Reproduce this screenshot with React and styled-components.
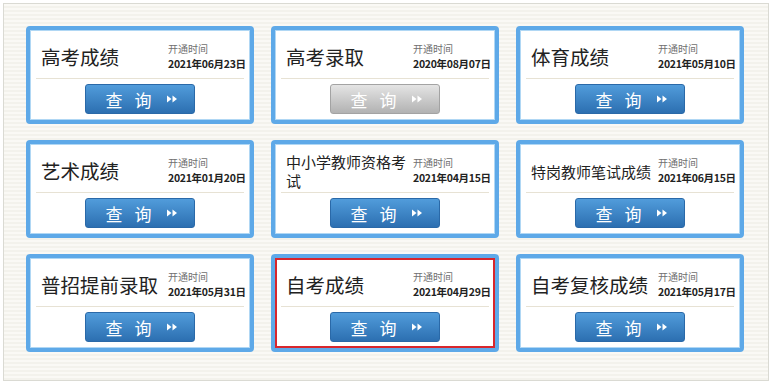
import styled, { createGlobalStyle } from "styled-components"

const Global = createGlobalStyle`
  body {
    margin: 0;
    background: #ffffff;
    font-family: "Noto Sans CJK SC", "Noto Sans", sans-serif;
  }
`

const items = [
  { title: "高考成绩", date: "2021年06月23日" },
  { title: "高考录取", date: "2020年08月07日", off: true },
  { title: "体育成绩", date: "2021年05月10日" },
  { title: "艺术成绩", date: "2021年01月20日" },
  { title: "中小学教师资格考试", date: "2021年04月15日", small: true },
  { title: "特岗教师笔试成绩", date: "2021年06月15日", small: true },
  { title: "普招提前录取", date: "2021年05月31日" },
  { title: "自考成绩", date: "2021年04月29日", active: true },
  { title: "自考复核成绩", date: "2021年05月17日" },
]

export default function App() {
  return (
    <>
      <Global />
      <Frame>
        <Panel>
          {items.map((item, i) => (
            <Card key={i}>
              <Body $active={item.active}>
                <Header>
                  <Title $small={item.small}>{item.title}</Title>
                  <DateBox>
                    <DateLabel>开通时间</DateLabel>
                    <DateValue>{item.date}</DateValue>
                  </DateBox>
                </Header>
                <Divider />
                <Button $off={item.off}>
                  <span>查</span>
                  <span>询</span>
                  <Arrows />
                </Button>
              </Body>
            </Card>
          ))}
        </Panel>
      </Frame>
    </>
  )
}

function Arrows() {
  return (
    <svg width="12" height="8" viewBox="0 0 12 8">
      <polygon points="1,0.5 5.5,4 1,7.5" fill="#fff" />
      <polygon points="6.5,0.5 11,4 6.5,7.5" fill="#fff" />
    </svg>
  )
}

const Frame = styled.div`
  width: 772px;
  height: 384px;
  box-sizing: border-box;
  padding: 3px;
`

const Panel = styled.div`
  height: 100%;
  box-sizing: border-box;
  border: 1px solid #dadad3;
  background: repeating-linear-gradient(
    to bottom,
    #faf9f5 0px,
    #faf9f5 2px,
    #f3f2ec 2px,
    #f3f2ec 4px
  );
  padding: 22px 0 0 22px;
  display: grid;
  grid-template-columns: repeat(3, 228px);
  grid-template-rows: repeat(3, 98px);
  column-gap: 17px;
  row-gap: 16px;
`

const Card = styled.div`
  box-sizing: border-box;
  border: 4px solid #5ea9e8;
  border-radius: 4px;
  background: #ffffff;
  box-shadow: inset 0 0 0 1px #b0d7f4;
`

const Body = styled.div`
  height: 100%;
  box-sizing: border-box;
  border: 2px solid ${p => (p.$active ? "#d8262c" : "transparent")};
  display: flex;
  flex-direction: column;
  align-items: center;
`

const Header = styled.div`
  width: 100%;
  height: 46px;
  box-sizing: border-box;
  padding: 4px 4px 0 9px;
  display: flex;
  align-items: center;
`

const Title = styled.div`
  width: 127px;
  flex-shrink: 0;
  font-size: ${p => (p.$small ? "15px" : "19.5px")};
  line-height: ${p => (p.$small ? "19px" : "24px")};
  color: #222222;
`

const DateBox = styled.div`
  display: flex;
  flex-direction: column;
  margin-top: -1px;
`

const DateLabel = styled.span`
  font-size: 10px;
  line-height: 14px;
  color: #707070;
`

const DateValue = styled.span`
  font-size: 10.5px;
  line-height: 16px;
  font-weight: bold;
  letter-spacing: -0.3px;
  color: #222222;
  white-space: nowrap;
`

const Divider = styled.div`
  width: 208px;
  height: 1px;
  background: #e7e2d4;
`

const Button = styled.div`
  margin-top: 5px;
  width: 110px;
  height: 30px;
  box-sizing: border-box;
  border: 1px solid ${p => (p.$off ? "#a3a3a3" : "#2a69a8")};
  border-radius: 3px;
  background: ${p =>
    p.$off
      ? "linear-gradient(to bottom, #e4e4e4, #b2b2b2)"
      : "linear-gradient(to bottom, #519cdb, #2c6fb1)"};
  display: flex;
  align-items: center;
  justify-content: center;
  gap: 12px;
  padding-left: 3px;
  color: #ffffff;
  font-size: 17px;
  line-height: 1;
  cursor: pointer;
  svg {
    margin-left: 2px;
  }
`
